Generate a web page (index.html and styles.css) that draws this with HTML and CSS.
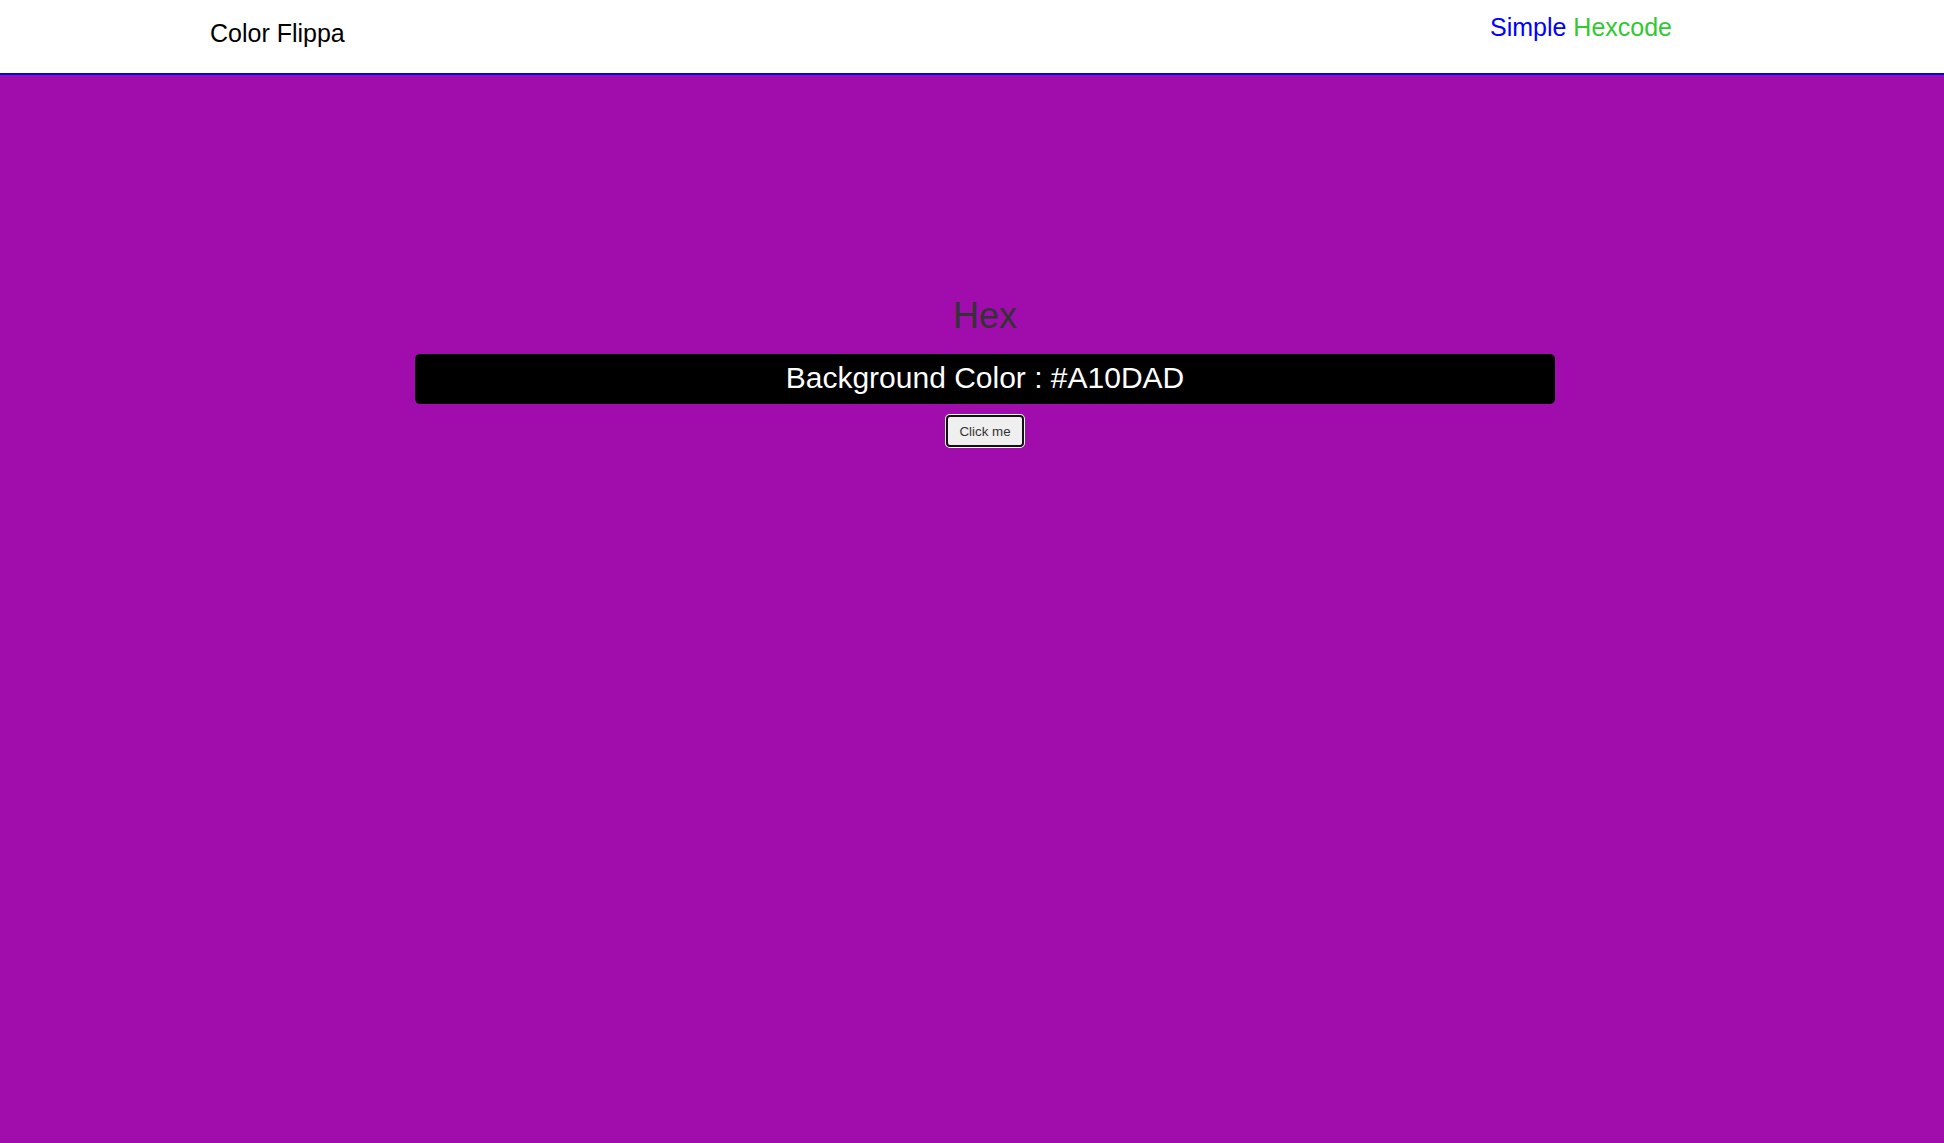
FILE: index.html
```html
<!DOCTYPE html>
<html lang="en">
<head>
<meta charset="utf-8">
<title>Color Flippa</title>
<link rel="stylesheet" href="styles.css">
</head>
<body>
<header class="topbar">
  <div class="brand">Color Flippa</div>
  <nav class="modes"><span class="simple">Simple</span> <span class="hexcode">Hexcode</span></nav>
</header>
<main class="stage">
  <section class="panel">
    <h1 class="title">Hex</h1>
    <div class="readout">Background Color : #A10DAD</div>
    <button class="flip" type="button">Click me</button>
  </section>
</main>
</body>
</html>
```
FILE: styles.css
```css
html, body {
  margin: 0;
  padding: 0;
  height: 100%;
}
body {
  background: #a10dad;
  font-family: "Liberation Sans", Arial, sans-serif;
  display: flex;
  flex-direction: column;
}
.topbar {
  background: #ffffff;
  height: 73px;
  border-bottom: 2px solid #0000ee;
  display: flex;
  justify-content: space-between;
  align-items: flex-start;
  padding: 0 272px 0 210px;
  box-sizing: content-box;
}
.brand {
  font-size: 25px;
  color: #000;
  padding-top: 19px;
}
.modes {
  font-size: 25px;
  padding-top: 13px;
  white-space: pre;
}
.simple { color: #0000ff; }
.hexcode { color: #32c832; }
.stage {
  flex: 1;
}
.panel {
  width: 1140px;
  margin: 0 0 0 415px;
  display: flex;
  flex-direction: column;
  align-items: center;
}
.title {
  margin: 220px 0 0;
  font-size: 36px;
  font-weight: normal;
  color: #333333;
  line-height: normal;
}
.readout {
  margin-top: 17px;
  align-self: stretch;
  height: 50px;
  background: #000;
  border-radius: 5px;
  color: #fff;
  font-size: 30px;
  display: flex;
  align-items: center;
  justify-content: center;
  padding-bottom: 3px;
  box-sizing: border-box;
}
.flip {
  margin-top: 11px;
  font-family: "Liberation Sans", Arial, sans-serif;
  font-size: 13.33px;
  color: #333;
  background: #efefef;
  border: 2px solid #101010;
  border-radius: 4px;
  box-shadow: 0 0 0 1px #ffffff;
  padding: 6px 11px;
  line-height: 15px;
  height: 32px;
  box-sizing: border-box;
}
```
